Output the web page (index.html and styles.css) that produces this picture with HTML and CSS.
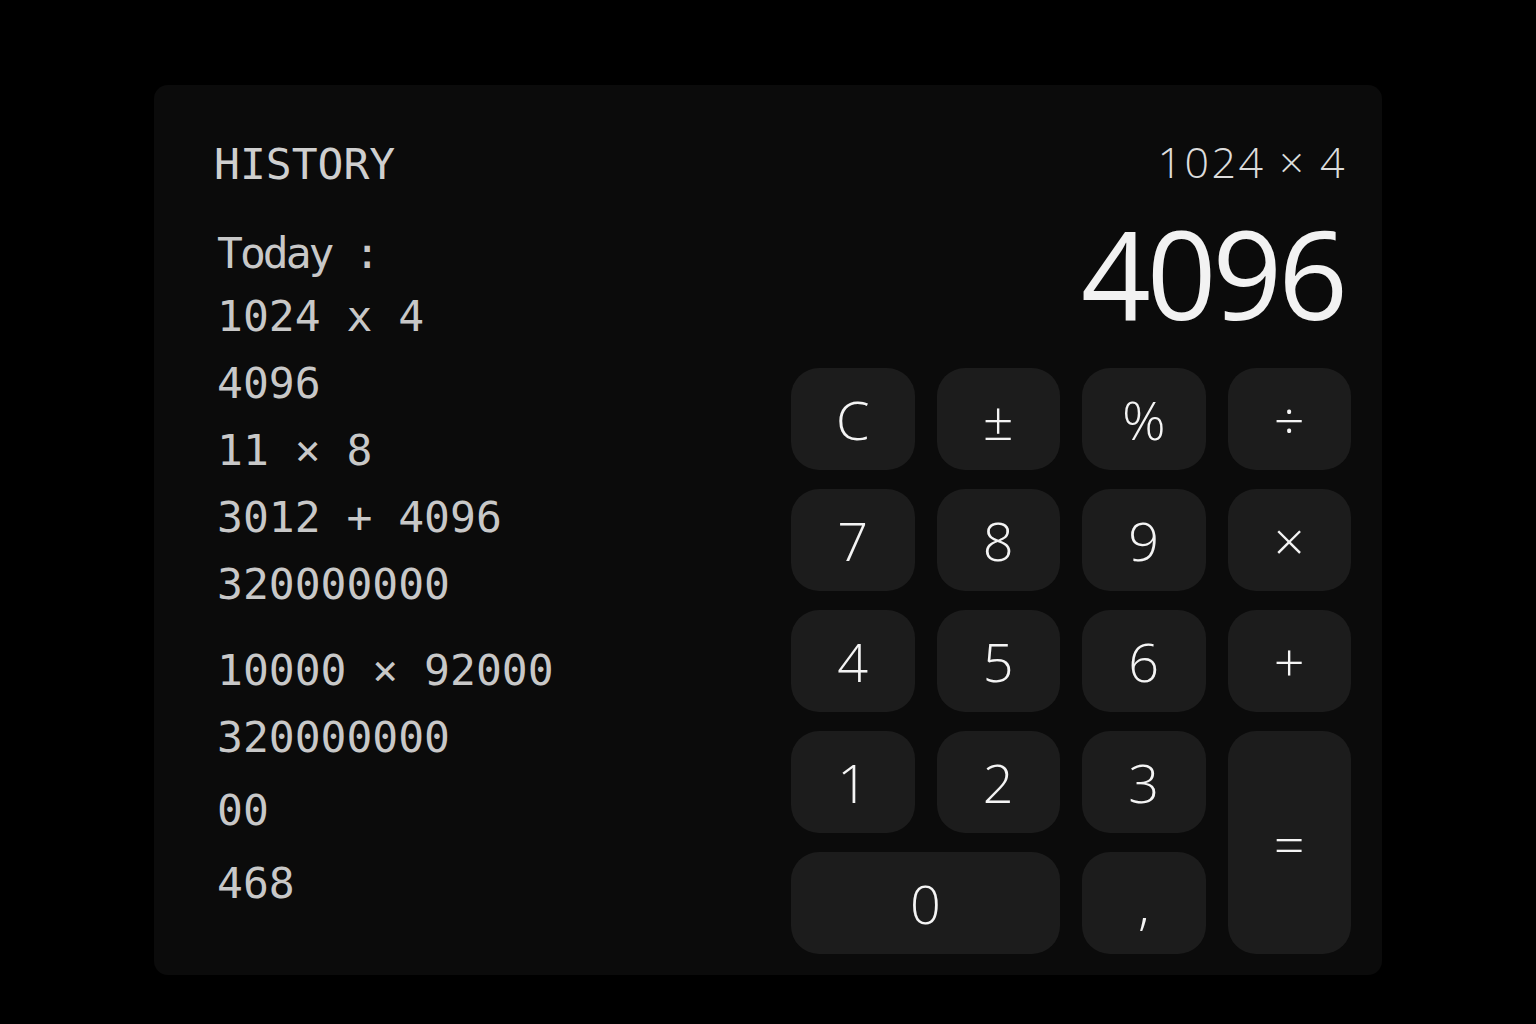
FILE: index.html
```html
<!DOCTYPE html>
<html lang="en">
<head>
<meta charset="utf-8">
<title>Calculator</title>
<link rel="stylesheet" href="styles.css">
</head>
<body>
<main class="calc">
  <section class="history">
    <h1 class="history-title">HISTORY</h1>
    <div class="history-date">Today :</div>
    <ul class="history-list">
      <li class="entry">1024 x 4</li>
      <li class="entry">4096</li>
      <li class="entry">11 × 8</li>
      <li class="entry">3012 + 4096</li>
      <li class="entry">320000000</li>
      <li class="entry entry-break">10000 × 92000</li>
      <li class="entry">320000000</li>
      <li class="entry entry-loose">00</li>
      <li class="entry entry-loose">468</li>
    </ul>
  </section>
  <section class="panel">
    <div class="expr">1024 × 4</div>
    <div class="result">4096</div>
    <div class="keypad">
      <button class="key">C</button>
      <button class="key">±</button>
      <button class="key">%</button>
      <button class="key">÷</button>
      <button class="key">7</button>
      <button class="key">8</button>
      <button class="key">9</button>
      <button class="key">×</button>
      <button class="key">4</button>
      <button class="key">5</button>
      <button class="key">6</button>
      <button class="key">+</button>
      <button class="key">1</button>
      <button class="key">2</button>
      <button class="key">3</button>
      <button class="key key-tall">=</button>
      <button class="key key-wide">0</button>
      <button class="key">,</button>
    </div>
  </section>
</main>
</body>
</html>
```
FILE: styles.css
```css
* { box-sizing: border-box; }
html, body {
  margin: 0;
  padding: 0;
  background: #000;
}
body {
  width: 1536px;
  height: 1024px;
  padding-top: 85px;
  overflow: hidden;
}
.calc {
  width: 1228px;
  margin: 0 auto;
  background: #0b0b0b;
  border-radius: 14px;
  display: flex;
  padding: 58px 31px 21px 60px;
}
.history {
  flex: 1;
  font-family: "DejaVu Sans Mono", monospace;
  color: #c8c8c8;
}
.history-title {
  margin: 0;
  font-size: 43px;
  line-height: 43px;
  font-weight: normal;
  color: #cfcfcf;
}
.history-date {
  margin-top: 37px;
  padding-left: 3px;
  font-size: 43px;
  line-height: 60px;
  letter-spacing: -3px;
}
.history-list {
  list-style: none;
  margin: 0;
  padding: 0 0 0 3px;
}
.entry {
  font-size: 43px;
  line-height: 67px;
  color: #c8c8c8;
}
.entry-break { margin-top: 19px; }
.entry-loose { margin-top: 6px; }

.panel {
  width: 560px;
  display: flex;
  flex-direction: column;
  font-family: "Open Sans", "Noto Sans", sans-serif;
}
.expr {
  text-align: right;
  padding-right: 4px;
  font-size: 43px;
  line-height: 37px;
  font-weight: 300;
  letter-spacing: 2.5px;
  color: #dcdcdc;
}
.result {
  margin-top: 32px;
  text-align: right;
  padding-right: 7px;
  font-size: 122px;
  line-height: 122px;
  font-weight: 400;
  letter-spacing: -4px;
  color: #f2f2f2;
}
.keypad {
  margin-top: 34px;
  display: grid;
  grid-template-columns: repeat(4, 1fr);
  grid-template-rows: repeat(5, 102px);
  gap: 19px 22px;
}
.key {
  border: none;
  border-radius: 28px;
  background: #1c1c1c;
  color: #f4f4f4;
  font-family: "Open Sans", "Noto Sans", sans-serif;
  font-size: 54px;
  font-weight: 300;
  display: flex;
  align-items: center;
  justify-content: center;
  padding: 0;
}
.key-tall { grid-row: span 2; }
.key-wide { grid-column: span 2; }
```
